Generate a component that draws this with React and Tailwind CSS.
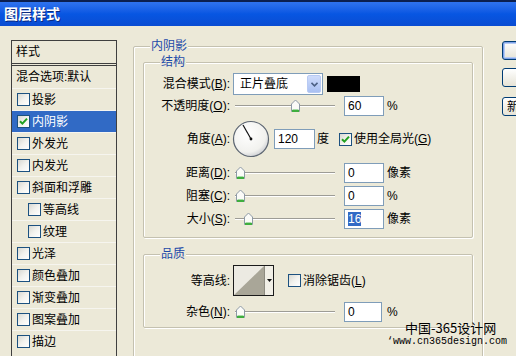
import React from 'react'

const listItems = [
  { name: '投影' },
  { name: '内阴影', checked: true, active: true },
  { name: '外发光' },
  { name: '内发光' },
  { name: '斜面和浮雕' },
  { name: '等高线', indent: true },
  { name: '纹理', indent: true },
  { name: '光泽' },
  { name: '颜色叠加' },
  { name: '渐变叠加' },
  { name: '图案叠加' },
  { name: '描边' },
]

function Checkbox({ checked }) {
  return (
    <span className="w-[13px] h-[13px] shrink-0 border border-[#1c5180] bg-gradient-to-br from-[#d8d8d2] via-[#f2f2ee] to-white flex items-center justify-center">
      {checked && (
        <svg width="9" height="9" viewBox="0 0 9 9">
          <path d="M1 4.2 L3.4 6.6 L8 1.6" fill="none" stroke="#21a121" strokeWidth="2" />
        </svg>
      )}
    </span>
  )
}

function Thumb() {
  return (
    <svg width="11" height="14" viewBox="0 0 11 14">
      <path d="M1.5 12.5 V5 L5.5 1 L9.5 5 V12.5 Z" fill="#fbfbf8" stroke="#8e9aa6" />
      <path d="M2 12 H9" stroke="#3fae3f" strokeWidth="2" />
      <path d="M2.5 10.5 H8.5" stroke="#a8dca8" />
    </svg>
  )
}

function Slider({ pos }) {
  return (
    <div className="relative w-[100px] h-[16px] shrink-0">
      <div className="absolute left-0 right-0 top-[7px] h-[2px] border-t border-[#9d9c96] border-b border-b-white" />
      <div className="absolute top-[1px]" style={{ left: pos }}>
        <Thumb />
      </div>
    </div>
  )
}

function Field({ value, w = 40, selected }) {
  return (
    <div
      className="h-[20px] shrink-0 border border-[#7f9db9] bg-white flex items-center pl-[3px] text-[12px] font-['Liberation_Sans',sans-serif] text-black"
      style={{ width: w }}
    >
      {selected ? <span className="bg-[#316ac5] text-white leading-[14px]">{value}</span> : value}
    </div>
  )
}

function GroupBox({ label, className, children }) {
  return (
    <div className={`relative border border-[#c4c1b0] rounded-[2px] shadow-[inset_1px_1px_0_#fff,1px_1px_0_#fff] ${className}`}>
      <span className="absolute -top-[9px] left-[16px] px-[1px] bg-[#ece9d8] text-[#1d4aa8] text-[12px] leading-[16px]">
        {label}
      </span>
      {children}
    </div>
  )
}

function Label({ children }) {
  return <span className="w-[86px] shrink-0 text-right text-[12px] text-black whitespace-nowrap">{children}</span>
}

function SliderRow({ label, pos, value, unit, selected }) {
  return (
    <div className="flex items-center h-[23px]">
      <Label>{label}</Label>
      <div className="ml-[5px]">
        <Slider pos={pos} />
      </div>
      <div className="ml-[9px]">
        <Field value={value} selected={selected} />
      </div>
      <span className="ml-[3px] text-[12px] text-black">{unit}</span>
    </div>
  )
}

function Dial() {
  return (
    <svg width="38" height="38" viewBox="0 0 38 38" className="shrink-0">
      <defs>
        <radialGradient id="dialFill" cx="40%" cy="35%" r="70%">
          <stop offset="0%" stopColor="#ffffff" />
          <stop offset="75%" stopColor="#f1f1ee" />
          <stop offset="100%" stopColor="#c9cbd0" />
        </radialGradient>
      </defs>
      <circle cx="19" cy="19" r="17.5" fill="url(#dialFill)" stroke="#5d6672" strokeWidth="1.2" />
      <line x1="19" y1="19" x2="11" y2="5" stroke="#111" strokeWidth="1.2" />
      <circle cx="19" cy="19" r="1.4" fill="#111" />
    </svg>
  )
}

function ContourBox() {
  return (
    <div className="w-[41px] h-[31px] shrink-0 border border-[#1a1a1a] flex bg-[#ecebe4]">
      <svg width="30" height="29" viewBox="0 0 30 29">
        <rect width="30" height="29" fill="#eceae2" />
        <polygon points="0,29 30,0 30,29" fill="#a9a698" />
      </svg>
      <div className="flex-1 border-l border-[#8d8b80] flex items-center justify-center bg-[#f1efe6]">
        <svg width="5" height="3" viewBox="0 0 5 3">
          <polygon points="0,0 5,0 2.5,3" fill="#111" />
        </svg>
      </div>
    </div>
  )
}

function Button({ children, def, className }) {
  return (
    <div
      className={`w-[84px] h-[19px] rounded-[3px] border border-[#003c74] bg-gradient-to-b from-white to-[#e6e3d6] flex items-center pl-[4px] text-[12px] text-black whitespace-nowrap overflow-hidden ${
        def ? 'shadow-[inset_0_0_0_1px_#7ea2e8,inset_0_0_0_2px_#b6cbf3]' : ''
      } ${className}`}
    >
      {children}
    </div>
  )
}

export default function App() {
  return (
    <div className="w-[516px] h-[356px] overflow-hidden bg-[#ece9d8] flex flex-col relative font-['Liberation_Sans','Noto_Sans_CJK_SC',sans-serif]">
      {/* Title bar */}
      <div className="h-[26px] shrink-0 border-t-2 border-[#0b1f4f] bg-gradient-to-b from-[#2f73ee] via-[#0756e2] to-[#0a4cd2] flex items-center pl-[4px]">
        <span className="text-white text-[14px] font-bold leading-none [text-shadow:1px_1px_0_#0a2a80]">图层样式</span>
      </div>

      <div className="flex items-start">
        {/* Left style list */}
        <div className="ml-[11px] mt-[14px] w-[106px] h-[330px] shrink-0 border border-[#3f3f3f] flex flex-col text-[12px] text-black">
          <div className="h-[25px] shrink-0 border-b-[3px] border-double border-[#3f3f3f] flex items-center pl-[4px]">样式</div>
          <div className="h-[22px] shrink-0 flex items-center pl-[4px]">混合选项:默认</div>
          {listItems.map((it) => (
            <div
              key={it.name}
              className={`h-[22px] shrink-0 flex items-center gap-[2px] border-t border-[#f6f5ef] ${
                it.indent ? 'pl-[16px]' : 'pl-[5px]'
              } ${it.active ? 'bg-[#316ac5] text-white border-[#316ac5]' : ''}`}
            >
              <Checkbox checked={it.checked} />
              <span className="whitespace-nowrap">{it.name}</span>
            </div>
          ))}
        </div>

        {/* Main settings */}
        <GroupBox label="内阴影" className="ml-[16px] mt-[20px] w-[350px] h-[320px] shrink-0">
          <div className="ml-[9px] mt-[15px] flex flex-col">
            <GroupBox label="结构" className="w-[330px] h-[176px]">
              <div className="flex flex-col pt-[10px]">
                <div className="flex items-center h-[22px]">
                  <Label>
                    混合模式(<u>B</u>):
                  </Label>
                  <div className="ml-[3px] w-[90px] h-[22px] border border-[#7f9db9] bg-white flex items-center text-[12px] text-black">
                    <span className="pl-[6px] flex-1">正片叠底</span>
                    <div className="w-[14px] h-[18px] mr-[1px] rounded-[2px] bg-gradient-to-b from-[#cfdcfb] to-[#a9c0f2] border border-[#b8caf3] flex items-center justify-center">
                      <svg width="7" height="5" viewBox="0 0 7 5">
                        <path d="M0.5 0.8 L3.5 3.8 L6.5 0.8" fill="none" stroke="#4d6185" strokeWidth="1.6" />
                      </svg>
                    </div>
                  </div>
                  <div className="ml-[4px] w-[33px] h-[16px] bg-black" />
                </div>

                <div className="flex items-center h-[22px]">
                  <Label>
                    不透明度(<u>O</u>):
                  </Label>
                  <div className="ml-[5px]">
                    <Slider pos={55} />
                  </div>
                  <div className="ml-[9px]">
                    <Field value="60" />
                  </div>
                  <span className="ml-[3px] text-[12px] text-black">%</span>
                </div>

                <div className="flex items-center h-[44px]">
                  <Label>
                    角度(<u>A</u>):
                  </Label>
                  <div className="ml-[2px]">
                    <Dial />
                  </div>
                  <div className="ml-[4px]">
                    <Field value="120" w={41} />
                  </div>
                  <span className="ml-[2px] text-[12px] text-black">度</span>
                  <div className="ml-[10px] flex items-center gap-[2px] text-[12px] text-black">
                    <Checkbox checked />
                    <span>
                      使用全局光(<u>G</u>)
                    </span>
                  </div>
                </div>

                <SliderRow label={<>距离(<u>D</u>):</>} pos={0} value="0" unit="像素" />
                <SliderRow label={<>阻塞(<u>C</u>):</>} pos={0} value="0" unit="%" />
                <SliderRow label={<>大小(<u>S</u>):</>} pos={8} value="16" unit="像素" selected />
              </div>
            </GroupBox>

            <GroupBox label="品质" className="mt-[16px] w-[330px] h-[74px]">
              <div className="flex flex-col pt-[10px]">
                <div className="flex items-center h-[31px]">
                  <Label>等高线:</Label>
                  <div className="ml-[3px]">
                    <ContourBox />
                  </div>
                  <div className="ml-[14px] flex items-center gap-[2px] text-[12px] text-black">
                    <Checkbox />
                    <span>
                      消除锯齿(<u>L</u>)
                    </span>
                  </div>
                </div>
                <div className="flex items-center h-[20px] mt-[6px]">
                  <Label>
                    杂色(<u>N</u>):
                  </Label>
                  <div className="ml-[5px]">
                    <Slider pos={0} />
                  </div>
                  <div className="ml-[9px]">
                    <Field value="0" w={38} />
                  </div>
                  <span className="ml-[5px] text-[12px] text-black">%</span>
                </div>
              </div>
            </GroupBox>
          </div>
        </GroupBox>

        {/* Dialog buttons (labels fall outside the visible crop) */}
        <div className="ml-[19px] mt-[15px] flex flex-col shrink-0">
          <Button def />
          <Button className="mt-[8px]" />
          <Button className="mt-[10px]">新</Button>
        </div>
      </div>

      {/* Watermark */}
      <div className="absolute left-[405px] top-[320px] text-[13px] leading-[15px] text-black font-['Noto_Sans_CJK_SC',sans-serif]">
        中国-365设计网
      </div>
      <div className="absolute left-[387px] top-[336px] text-[10px] leading-[12px] text-black font-['Liberation_Mono',monospace]">
        ‘www.cn365design.com
      </div>
    </div>
  )
}
